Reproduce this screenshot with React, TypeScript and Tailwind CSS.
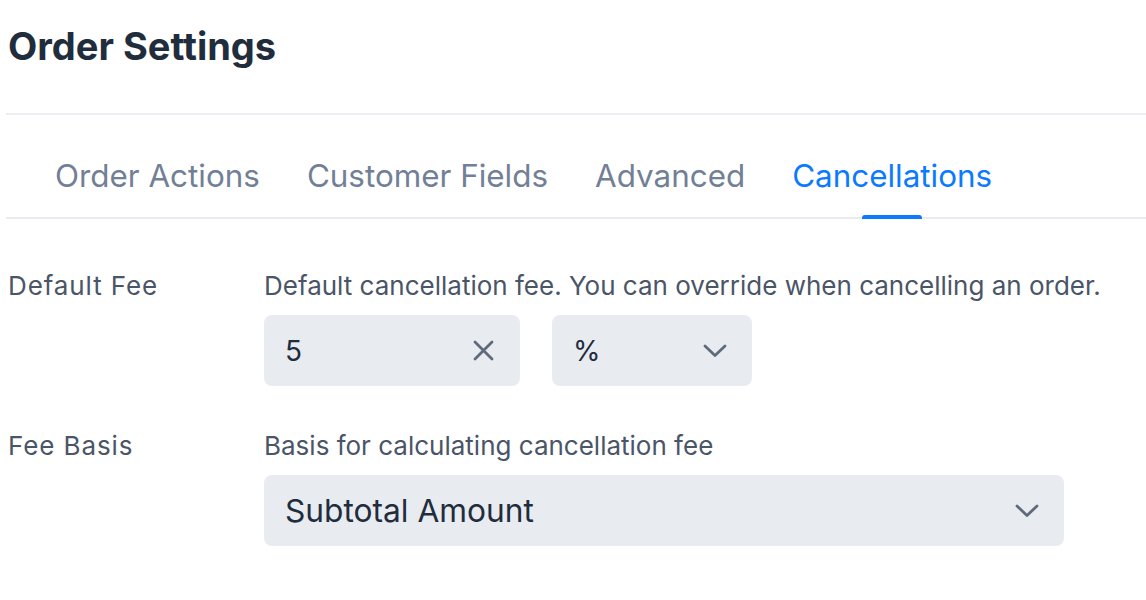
const tabs = ['Order Actions', 'Customer Fields', 'Advanced', 'Cancellations'];

function Chevron() {
  return (
    <svg width="24" height="14" viewBox="0 0 24 14" fill="none" className="text-[#5f6b7a]">
      <polyline points="2,2 12,11.5 22,2" stroke="currentColor" strokeWidth="2.8" strokeLinecap="round" strokeLinejoin="round" />
    </svg>
  );
}

function Cross() {
  return (
    <svg width="21" height="21" viewBox="0 0 21 21" fill="none" className="text-[#5f6b7a]">
      <path d="M2 2L19 19M19 2L2 19" stroke="currentColor" strokeWidth="2.8" strokeLinecap="round" />
    </svg>
  );
}

export default function App() {
  const active = 'Cancellations';

  return (
    <div className="min-h-[600px] w-[1146px] bg-white font-['Inter',sans-serif] text-[#1f2d3d]">
      <h1 className="pl-2 pt-[22px] pb-[43px] text-[38px] font-bold leading-[48px] text-[#1f2d3d]">
        Order Settings
      </h1>

      <div className="ml-[6px] border-t-2 border-[#eceef1]">
        {/* Tabs */}
        <div className="flex gap-[47px] border-b-2 border-[#e8ebf0] pl-[49px]">
          {tabs.map((t) => (
            <div key={t} className="relative pt-[42px] pb-[22px]">
              <span
                className={
                  'text-[31.4px] leading-[38px] ' +
                  (t === active ? 'text-[#0a7aff]' : 'text-[#718096]')
                }
              >
                {t}
              </span>
              {t === active && (
                <span className="absolute -bottom-[2px] left-1/2 h-[4px] w-[60px] -translate-x-1/2 rounded-t-[3px] bg-[#0a7aff]" />
              )}
            </div>
          ))}
        </div>
      </div>

      {/* Form */}
      <div className="flex flex-col gap-[44px] pt-[51px] pl-2">
        <div className="flex">
          <div className="w-[256px] text-[26px] tracking-[0.9px] leading-[32px] text-[#4a5568]">Default Fee</div>
          <div className="flex flex-col gap-[13px]">
            <div className="text-[26px] leading-[32px] text-[#4a5568]">
              Default cancellation fee. You can override when cancelling an order.
            </div>
            <div className="flex gap-[32px]">
              <div className="flex h-[71px] w-[256px] items-center justify-between rounded-[8px] bg-[#e8ebf0] pl-[21px] pr-[26px]">
                <span className="text-[28px] text-[#1f2d3d]">5</span>
                <Cross />
              </div>
              <div className="flex h-[71px] w-[200px] items-center justify-between rounded-[8px] bg-[#e8ebf0] pl-[21px] pr-[25px]">
                <span className="text-[28px] text-[#1f2d3d]">%</span>
                <Chevron />
              </div>
            </div>
          </div>
        </div>

        <div className="flex">
          <div className="w-[256px] text-[26px] tracking-[0.9px] leading-[32px] text-[#4a5568]">Fee Basis</div>
          <div className="flex flex-col gap-[13px]">
            <div className="text-[26px] leading-[32px] text-[#4a5568]">Basis for calculating cancellation fee</div>
            <div className="flex h-[71px] w-[800px] items-center justify-between rounded-[8px] bg-[#e8ebf0] pl-[21px] pr-[25px]">
              <span className="text-[31.7px] text-[#1f2d3d]">Subtotal Amount</span>
              <Chevron />
            </div>
          </div>
        </div>
      </div>
    </div>
  );
}
